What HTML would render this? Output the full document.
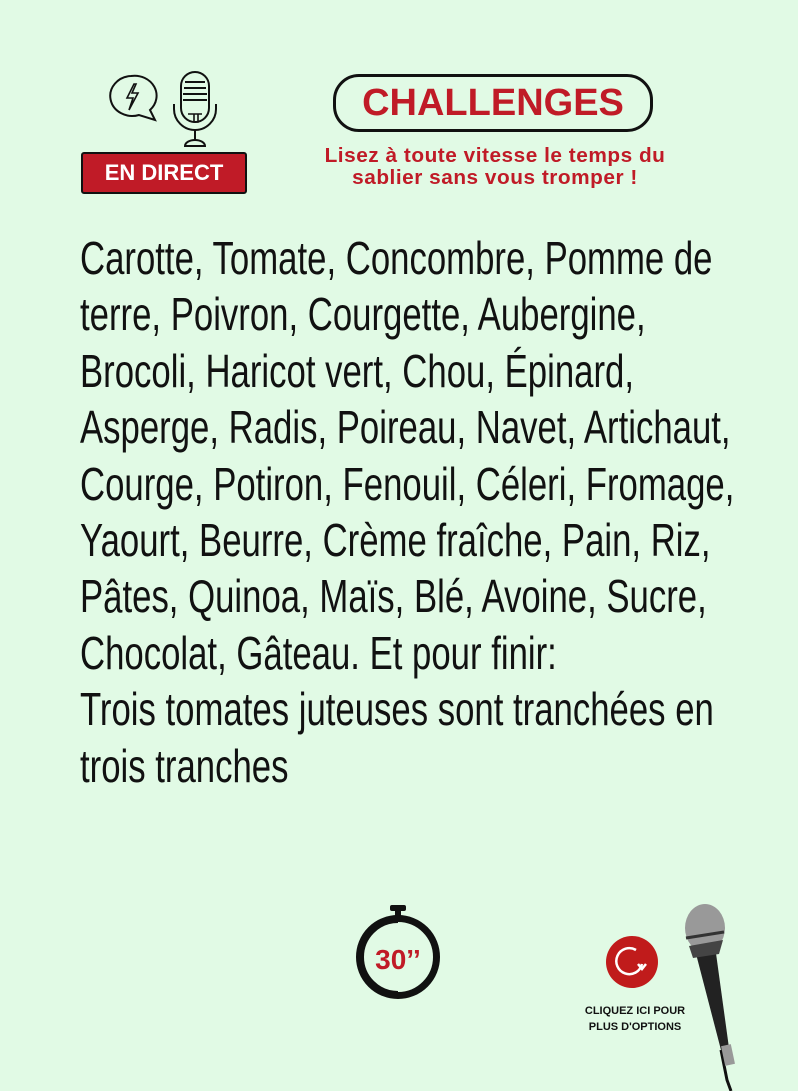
<!DOCTYPE html>
<html><head><meta charset="utf-8"><style>
body{margin:0;width:798px;height:1091px;background:#e1fae5;position:relative;overflow:hidden;font-family:"Liberation Sans",sans-serif}
.abs{position:absolute}
#txt{left:80px;top:230px;font-family:"Liberation Sans",sans-serif;font-size:46px;line-height:56.4px;color:#111;white-space:nowrap;transform:scaleX(0.755);transform-origin:0 0}
</style></head><body>
<svg class="abs" style="left:104px;top:72px" width="60" height="55" viewBox="0 0 60 55">
<path d="M27 4a22 20 0 1 0 8 39l16 5-5-10a22 20 0 0 0-19-34z" fill="none" stroke="#111" stroke-width="2"/>
<path d="M30 12l-7 14h6l-4 12 9-17h-6l4-9z" fill="none" stroke="#111" stroke-width="1.6"/>
</svg>
<svg class="abs" style="left:170px;top:70px" width="50" height="80" viewBox="0 0 50 80">
<rect x="11" y="2" width="28" height="50" rx="14" fill="none" stroke="#111" stroke-width="2"/>
<g stroke="#111" stroke-width="2"><line x1="15" y1="12" x2="35" y2="12"/><line x1="14" y1="18" x2="36" y2="18"/><line x1="13" y1="24" x2="37" y2="24"/><line x1="13" y1="30" x2="37" y2="30"/></g>
<path d="M4 34v5a21 21 0 0 0 42 0v-5" fill="none" stroke="#111" stroke-width="2"/>
<path d="M18 44h14M24 44v8h4v-8" fill="none" stroke="#111" stroke-width="1.6"/>
<line x1="25" y1="60" x2="25" y2="70" stroke="#111" stroke-width="2"/>
<path d="M15 76a10 6 0 0 1 20 0z" fill="none" stroke="#111" stroke-width="2"/>
</svg>
<div class="abs" style="left:81px;top:152px;width:162px;height:38px;background:#c01b27;border:2px solid #111;border-radius:3px;color:#fff;font-weight:bold;font-size:22px;line-height:38px;text-align:center">EN DIRECT</div>
<div class="abs" style="left:333px;top:74px;width:314px;height:52px;border:3px solid #111;border-radius:26px;color:#c01b27;font-weight:bold;font-size:38px;line-height:52px;text-align:center">CHALLENGES</div>
<div class="abs" style="left:280px;top:145px;width:430px;text-align:center;color:#c01b27;font-weight:bold;font-size:20px;line-height:22px;letter-spacing:0.5px;transform:scaleX(1.04);transform-origin:50% 0">Lisez à toute vitesse le temps du<br>sablier sans vous tromper !</div>
<div id="txt" class="abs">Carotte, Tomate, Concombre, Pomme de<br>terre, Poivron, Courgette, Aubergine,<br>Brocoli, Haricot vert, Chou, Épinard,<br>Asperge, Radis, Poireau, Navet, Artichaut,<br>Courge, Potiron, Fenouil, Céleri, Fromage,<br>Yaourt, Beurre, Crème fraîche, Pain, Riz,<br>Pâtes, Quinoa, Maïs, Blé, Avoine, Sucre,<br>Chocolat, Gâteau. Et pour finir:<br>Trois tomates juteuses sont tranchées en<br>trois tranches</div>
<svg class="abs" style="left:354px;top:903px" width="90" height="100" viewBox="0 0 90 100">
<rect x="36" y="2" width="16" height="6" rx="2" fill="#111"/><rect x="41" y="6" width="6" height="8" fill="#111"/>
<circle cx="44" cy="54" r="38" fill="none" stroke="#111" stroke-width="8"/>
<path d="M44 20a34 34 0 0 1 0 68" fill="none" stroke="#e1fae5" stroke-width="2"/>
<text x="44" y="66" text-anchor="middle" font-family="Liberation Sans" font-weight="bold" font-size="28" fill="#c01b27">30’’</text>
</svg>
<svg class="abs" style="left:606px;top:936px" width="52" height="52" viewBox="0 0 52 52">
<circle cx="26" cy="26" r="26" fill="#c01b1b"/>
<path d="M36 28a13 13 0 1 1-6-14" fill="none" stroke="#fff" stroke-width="2.5"/>
<path d="M32 28l4 5 4-5" fill="none" stroke="#fff" stroke-width="2.5"/>
</svg>
<div class="abs" style="left:560px;top:1003px;width:150px;text-align:center;font-weight:bold;font-size:11px;line-height:16px;color:#111">CLIQUEZ ICI POUR<br>PLUS D'OPTIONS</div>
<svg class="abs" style="left:665px;top:900px" width="110" height="191" viewBox="0 0 110 191">
<path d="M30 50l26 100 8-2-14-102z" fill="#222"/>
<path d="M56 150l6 30 4 11" stroke="#111" stroke-width="3" fill="none"/>
<rect x="58" y="145" width="10" height="20" fill="#999" transform="rotate(-12 63 155)"/>
<ellipse cx="40" cy="28" rx="20" ry="24" fill="#999"/>
<path d="M21 38l38-6" stroke="#333" stroke-width="3"/>
<path d="M24 46l34-6 -4 14-26 4z" fill="#444"/>
</svg>
</body></html>
